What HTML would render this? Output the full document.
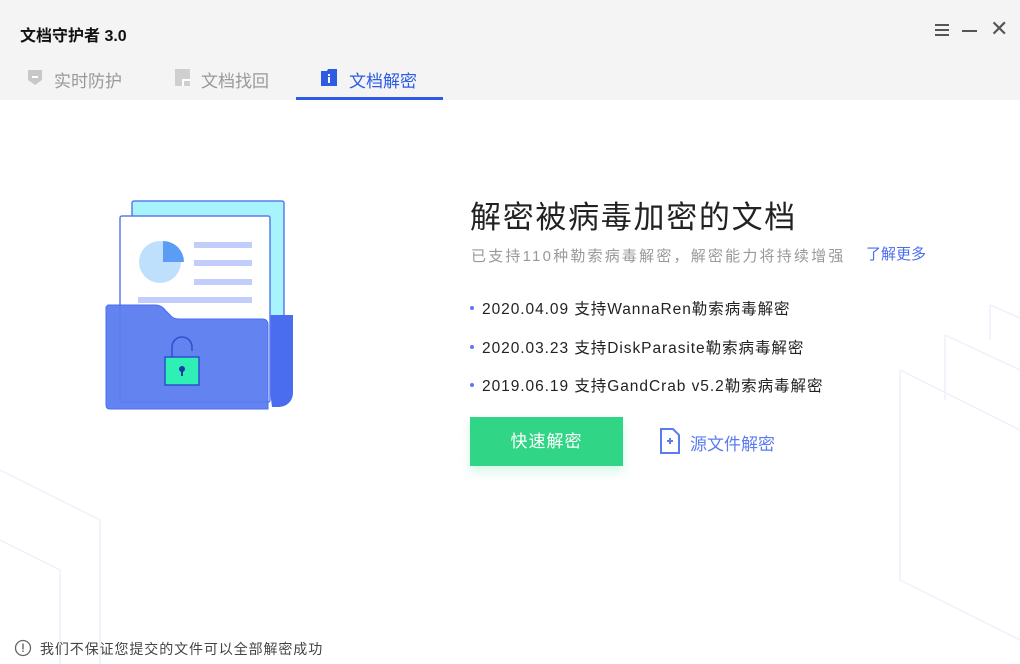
<!DOCTYPE html>
<html><head><meta charset="utf-8"><style>
*{margin:0;padding:0;box-sizing:border-box}
body{width:1020px;height:664px;overflow:hidden;background:#fff;font-family:"Liberation Sans","Noto Sans CJK SC",sans-serif;position:relative}
.top{position:absolute;left:0;top:0;width:1020px;height:100px;background:#f4f4f4}
.title{position:absolute;left:20px;top:22px;font-size:16px;font-weight:bold;color:#111}
.tab{position:absolute;top:67px;font-size:17px;color:#999}
.abs{position:absolute}
h1{position:absolute;left:470px;top:192px;font-size:31px;font-weight:normal;color:#222;letter-spacing:1.7px}
.sub{position:absolute;left:471px;top:245px;font-size:15px;color:#999;letter-spacing:2.2px}
.more{position:absolute;left:866px;top:243px;font-size:15px;color:#4a6df0}
.li{position:absolute;left:470px;font-size:15.5px;color:#222;letter-spacing:0.95px}
.li:before{content:"";display:inline-block;width:4px;height:4px;border-radius:2px;background:#5b7cf0;margin-right:8px;vertical-align:middle;position:relative;top:-2px}
.btn{position:absolute;left:470px;top:417px;width:153px;height:49px;background:#30d685;color:#fff;font-size:17px;text-align:center;line-height:49px;box-shadow:0 6px 10px rgba(48,214,133,.2);letter-spacing:1px}
.link{position:absolute;left:690px;top:430px;font-size:17px;color:#5b7cf0}
.foot{position:absolute;left:40px;top:639px;font-size:14px;color:#444;letter-spacing:0.9px}
</style></head><body>
<svg class="abs" style="left:0;top:0" width="1020" height="664">
<g fill="none" stroke="#eef1fb" stroke-width="1.5">
<path d="M900 370 L1020 430"/><path d="M900 370 L900 580 L1020 640"/>
<path d="M945 335 L1020 370"/><path d="M990 305 L1020 318"/>
<path d="M945 335 L945 400"/><path d="M990 305 L990 340"/>
<path d="M0 470 L100 520 L100 664"/><path d="M0 540 L60 570 L60 664"/>
</g></svg>
<div class="top"></div>
<div class="title">文档守护者 3.0</div>
<div class="abs" style="left:935px;top:24px;width:14px;height:2px;background:#555;box-shadow:0 5px 0 #555,0 10px 0 #555"></div>
<div class="abs" style="left:962px;top:30px;width:15px;height:2px;background:#555"></div>
<div class="abs" style="left:990px;top:18px;font-size:22px;color:#555;line-height:22px">✕</div>
<svg class="abs" style="left:27px;top:69px" width="16" height="17"><path d="M1 1H15V11L8 16L1 11Z" fill="#c8c8c8"/><path d="M5 8H11" stroke="#fff" stroke-width="2"/></svg>
<div class="tab" style="left:54px">实时防护</div>
<svg class="abs" style="left:175px;top:69px" width="15" height="17"><path d="M0 0H15V17H0Z" fill="#cfcfcf"/><path d="M7 10H15V17H7Z" fill="#fff"/><path d="M9 12H15V17H9Z" fill="#cfcfcf"/></svg>
<div class="tab" style="left:201px">文档找回</div>
<svg class="abs" style="left:321px;top:69px" width="16" height="17"><path d="M0 2H6L7 0H16V17H0Z" fill="#2d5be3"/><rect x="7" y="5" width="2" height="2" fill="#fff"/><rect x="7" y="8" width="2" height="6" fill="#fff"/></svg>
<div class="tab" style="left:349px;color:#2d5be3">文档解密</div>
<div class="abs" style="left:296px;top:97px;width:147px;height:3px;background:#2d5be3"></div>

<svg class="abs" style="left:100px;top:195px" width="200" height="220">
<rect x="32" y="6" width="152" height="188" rx="2" fill="#a8f4fd" stroke="#5b7cf0" stroke-width="1.5"/>
<path d="M160 120H193V198a14 14 0 0 1-14 14H172Z" fill="#4a6df0"/>
<rect x="20" y="21" width="150" height="186" rx="2" fill="#fff" stroke="#5b7cf0" stroke-width="1.5"/>
<circle cx="60" cy="67" r="21" fill="#bfe0fc"/>
<path d="M63 46a21 21 0 0 1 21 21H63Z" fill="#5b9df5"/>
<rect x="94" y="47" width="58" height="6" fill="#c2cdfb"/><rect x="94" y="65" width="58" height="6" fill="#c2cdfb"/><rect x="94" y="84" width="58" height="6" fill="#c2cdfb"/><rect x="38" y="102" width="114" height="6" fill="#c2cdfb"/>
<path d="M8 110H55Q62 110 66 116L72 122Q75 124 80 124H162Q168 124 168 130V214H10Q6 214 6 210V112Z" fill="#5b7cf0" fill-opacity=".95" stroke="#4a6df0"/>
<path d="M72 162V152a10 10 0 0 1 20 0V156" fill="none" stroke="#2d4fd0" stroke-width="1.5"/>
<rect x="65" y="162" width="34" height="28" fill="#2ff0b4" stroke="#2d4fd0" stroke-width="1.5"/>
<circle cx="82" cy="174" r="3" fill="#1a3aa0"/><rect x="81" y="174" width="2" height="7" fill="#1a3aa0"/>
</svg>

<h1>解密被病毒加密的文档</h1>
<div class="sub">已支持110种勒索病毒解密，解密能力将持续增强</div>
<div class="more">了解更多</div>
<div class="li" style="top:297px">2020.04.09 支持WannaRen勒索病毒解密</div>
<div class="li" style="top:336px">2020.03.23 支持DiskParasite勒索病毒解密</div>
<div class="li" style="top:374px">2019.06.19 支持GandCrab v5.2勒索病毒解密</div>
<div class="btn">快速解密</div>
<svg class="abs" style="left:660px;top:428px" width="20" height="26"><path d="M1 1H13L19 7V25H1Z" fill="none" stroke="#5b7cf0" stroke-width="2"/><path d="M7 13H13M10 10V16" stroke="#5b7cf0" stroke-width="2"/></svg>
<div class="link">源文件解密</div>
<svg class="abs" style="left:14px;top:639px" width="18" height="18"><circle cx="9" cy="9" r="7.5" fill="none" stroke="#666" stroke-width="1.3"/><rect x="8.3" y="4.5" width="1.4" height="6" fill="#666"/><rect x="8.3" y="11.5" width="1.4" height="1.5" fill="#666"/></svg>
<div class="foot">我们不保证您提交的文件可以全部解密成功</div>
</body></html>
